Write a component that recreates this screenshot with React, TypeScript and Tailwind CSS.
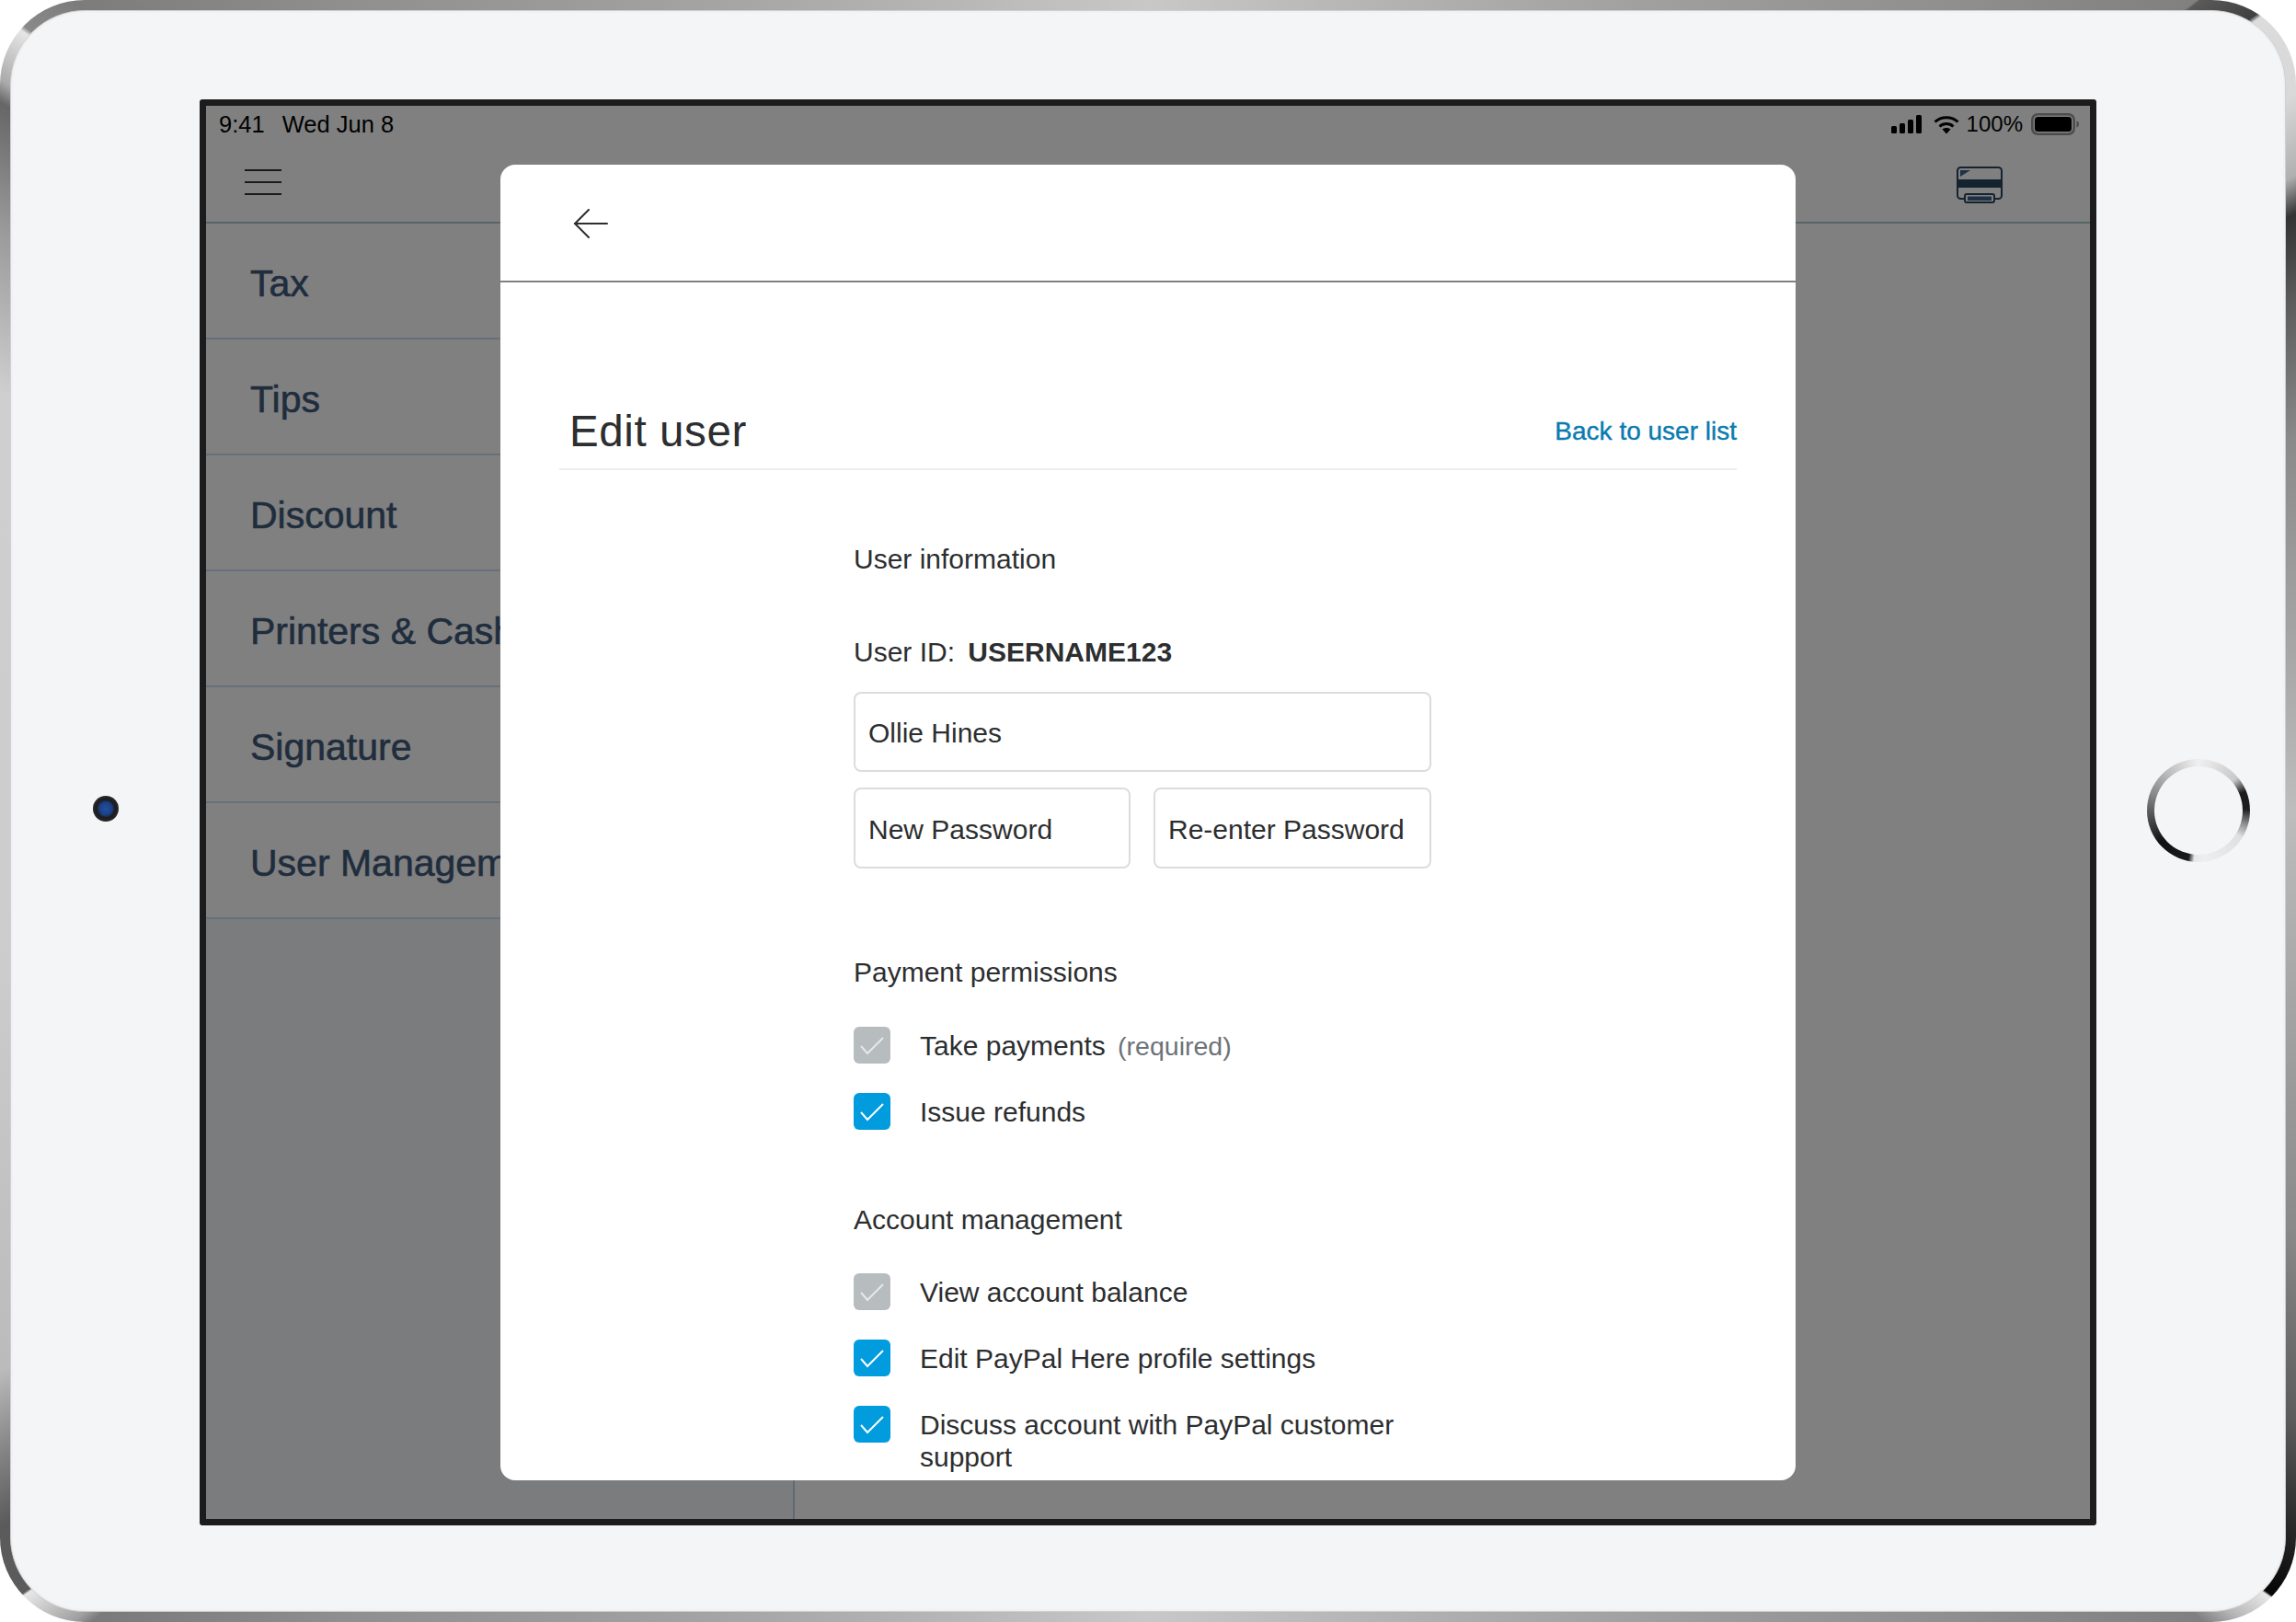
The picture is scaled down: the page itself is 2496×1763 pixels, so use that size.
import React from 'react';

const navItems = ['Tax', 'Tips', 'Discount', 'Printers & Cash Drawer', 'Signature', 'User Management'];

const SignalIcon = () => (
  <svg width="33" height="20" viewBox="0 0 33 20" fill="#000">
    <rect x="0" y="12" width="6" height="8" rx="1.5" />
    <rect x="9" y="9" width="6" height="11" rx="1.5" />
    <rect x="18" y="5" width="6" height="15" rx="1.5" />
    <rect x="27" y="0" width="6" height="20" rx="1.5" />
  </svg>
);

const WifiIcon = () => (
  <svg width="28" height="21" viewBox="0 0 28 21" fill="none" stroke="#000" strokeWidth="3">
    <path d="M1.5 7.5C8.5 1 19.5 1 26.5 7.5" />
    <path d="M6.5 12.5C10.8 8.6 17.2 8.6 21.5 12.5" />
    <path d="M9.5 15.6C12 13.6 16 13.6 18.5 15.6L14 20.5Z" fill="#000" stroke="none" />
  </svg>
);

const BatteryIcon = () => (
  <svg width="53" height="24" viewBox="0 0 53 24">
    <rect x="1.25" y="1.25" width="45.5" height="21.5" rx="6" fill="none" stroke="#4d4d4d" strokeWidth="2.5" />
    <rect x="4" y="4" width="40" height="16" rx="3.5" fill="#000" />
    <path d="M49.5 8.5C51.5 9 52 10.500 52 12C52 13.500 51.500 15 49.500 15.500Z" fill="#4d4d4d" />
  </svg>
);

const CardReaderIcon = () => (
  <svg width="50" height="40" viewBox="0 0 50 40" className="mt-[6px]">
    <rect x="1" y="1" width="48" height="34" rx="3.500" fill="none" stroke="#14232f" strokeWidth="2" />
    <rect x="1" y="14" width="48" height="9" fill="#14232f" />
    <path d="M4 4H15L4 11Z" fill="#1f3245" />
    <rect x="9" y="30" width="32" height="9" rx="2" fill="#808080" stroke="#14232f" strokeWidth="2" />
    <rect x="12" y="32.500" width="26" height="4.500" fill="#1f3245" />
  </svg>
);

const BackArrow = () => (
  <svg width="38" height="32" viewBox="0 0 38 32" fill="none" stroke="#2c2e2f" strokeWidth="2" strokeLinecap="round">
    <path d="M37 16H2" />
    <path d="M17 1L2 16L17 31" />
  </svg>
);

const Checkbox = ({ disabled }: { disabled?: boolean }) => (
  <span className={`flex h-[40px] w-[40px] shrink-0 items-center justify-center rounded-[6px] ${disabled ? 'bg-[#b7bcbf]' : 'bg-[#009cde]'}`}>
    <svg width="40" height="40" viewBox="0 0 40 40" fill="none" stroke={disabled ? '#e6e8e9' : '#fff'} strokeWidth="2">
      <path d="M8 21L15 29L32 12" />
    </svg>
  </span>
);

const CheckRow = ({ disabled, children }: { disabled?: boolean; children: React.ReactNode }) => (
  <label className="flex items-start gap-[32px]">
    <Checkbox disabled={disabled} />
    <span className="mt-[3px] w-[556px] text-[30px] leading-[35px]">{children}</span>
  </label>
);

const TextField = ({ value, className }: { value: string; className: string }) => (
  <input
    readOnly
    value={value}
    className={`rounded-[8px] border-2 border-[#dcdcdc] bg-white px-[14px] pt-[3px] text-[30px] text-[#2c2e2f] outline-none ${className}`}
  />
);

const EditUserModal = () => (
  <div className="absolute left-[320px] top-[64px] h-[1430px] w-[1408px] overflow-hidden rounded-[16px] bg-white text-[#2c2e2f]">
    <div className="flex h-[128px] items-center border-b-2 border-[#808080] pl-[79px] pt-[2px]">
      <BackArrow />
    </div>
    <div className="mx-[64px] mt-[121px] flex h-[83px] items-center justify-between border-b-2 border-[#eaedf2] pl-[11px]">
      <h1 className="text-[47.5px] leading-[56px] tracking-[0.6px]">Edit user</h1>
      <a className="text-[28px] text-[#0a7bb0] [-webkit-text-stroke:0.4px_#0a7bb0]">Back to user list</a>
    </div>

    <div className="ml-[384px] w-[628px]">
      <h2 className="mt-[79px] text-[30px] leading-[36px]">User information</h2>
      <p className="mt-[65px] text-[30px] leading-[36px]">
        User ID: <span className="ml-[6px] font-bold">USERNAME123</span>
      </p>
      <TextField value="Ollie Hines" className="mt-[25px] block h-[87px] w-full" />
      <div className="mt-[17px] flex justify-between">
        <TextField value="New Password" className="h-[88px] w-[301px]" />
        <TextField value="Re-enter Password" className="h-[88px] w-[302px]" />
      </div>

      <h2 className="mt-[95px] text-[30px] leading-[36px]">Payment permissions</h2>
      <div className="mt-[41px] flex flex-col gap-[32px]">
        <CheckRow disabled>
          Take payments <span className="ml-[5px] text-[28.5px] text-[#6c7378]">(required)</span>
        </CheckRow>
        <CheckRow>Issue refunds</CheckRow>
      </div>

      <h2 className="mt-[80px] text-[30px] leading-[36px]">Account management</h2>
      <div className="mt-[40px] flex flex-col gap-[32px]">
        <CheckRow disabled>View account balance</CheckRow>
        <CheckRow>Edit PayPal Here profile settings</CheckRow>
        <CheckRow>Discuss account with PayPal customer support</CheckRow>
      </div>
    </div>
  </div>
);

const Screen = () => (
  <div className="relative flex h-[1550px] w-[2062px] shrink-0 flex-col overflow-hidden rounded-[3px] border-[7px] border-[#1c1c1c] bg-[#808080]">
    <div className="flex h-[40px] items-center justify-between pl-[14px] pr-[11px] text-[25.5px] text-black">
      <div className="flex gap-[19px]">
        <span>9:41</span>
        <span>Wed Jun 8</span>
      </div>
      <div className="flex items-center">
        <SignalIcon />
        <span className="ml-[13px]"><WifiIcon /></span>
        <span className="ml-[8px] text-[24px]">100%</span>
        <span className="ml-[9px]"><BatteryIcon /></span>
      </div>
    </div>
    <div className="flex h-[88px] items-center justify-between border-b-2 border-[#566568] pl-[42px] pr-[95px]">
      <div className="flex w-[40px] flex-col gap-[11px]">
        <div className="h-[2px] bg-[#1a1a1a]" />
        <div className="h-[2px] bg-[#1a1a1a]" />
        <div className="h-[2px] bg-[#1a1a1a]" />
      </div>
      <CardReaderIcon />
    </div>
    <div className="flex flex-1">
      <div className="w-[640px] border-r-2 border-[#616a73] bg-[#7b7c7d]">
        {navItems.map((item) => (
          <div
            key={item}
            className="flex h-[126px] items-center border-b-2 border-[#66707c] bg-[#808080] pl-[48px] pt-[8px] text-[41px] text-[#1f2d3d] [-webkit-text-stroke:0.6px_#1f2d3d]"
          >
            {item}
          </div>
        ))}
      </div>
    </div>
    <EditUserModal />
  </div>
);

const App = () => (
  <div className="h-[1763px] w-[2496px] bg-white [font-family:'Liberation_Sans',sans-serif]">
    <div className="h-full rounded-[92px] bg-[conic-gradient(#c8c8c8_0deg,#8f8f8f_45deg,#808080_52.3deg,#5a5a5a_52.4deg,#3f3f3f_54.3deg,#dcdcdc_54.5deg,#d8d8d8_58deg,#b0b0b0_61deg,#333333_62.5deg,#5c5c5c_66deg,#8a8a8a_72deg,#bdbdbd_90deg,#8a8a8a_110deg,#5c5c5c_118deg,#050505_124.9deg,#e8e8e8_125deg,#b5b5b5_126.5deg,#808080_127.5deg,#8f8f8f_135deg,#c8c8c8_180deg,#8f8f8f_225deg,#7a7a7a_232.5deg,#a0a0a0_233deg,#e8e8e8_235.1deg,#5c5c5c_235.2deg,#5a5a5a_238deg,#888888_241deg,#bbbbbb_244deg,#cccccc_262deg,#cfcfcf_290deg,#999999_297deg,#666666_301.7deg,#aaaaaa_302.5deg,#e6e6e6_304.7deg,#8a8a8a_304.9deg,#7c7c7c_307deg,#8f8f8f_315deg,#c8c8c8_360deg)] p-[11px]">
      <div className="flex h-full items-start rounded-[81px] border border-[#cfcfcf] bg-[#f4f5f7] pt-[96px] shadow-[inset_0_0_0_2px_#f0f1f3]">
        <div className="flex h-[1550px] w-[205px] items-center justify-center pb-[8px]">
          <div className="h-[28px] w-[28px] rounded-full bg-[radial-gradient(circle,#23509f_0%,#1b3f85_35%,#1c1c1e_50%,#333335_90%)]" />
        </div>
        <Screen />
        <div className="flex h-[1550px] flex-1 items-center justify-end pb-[4px] pr-[38px]">
          <div className="flex h-[112px] w-[112px] items-center justify-center rounded-full bg-[conic-gradient(#f0f0f0_0deg,#c8c8c8_50deg,#1c1c1c_68deg,#1c1c1c_88deg,#888888_105deg,#e0e0e0_122deg,#eeeeee_172deg,#e8e8e8_185deg,#1a1a1a_192deg,#111111_230deg,#555555_265deg,#888888_290deg,#bbbbbb_320deg,#f0f0f0_360deg)]">
            <div className="h-[96px] w-[96px] rounded-full bg-[#f4f5f7]" />
          </div>
        </div>
      </div>
    </div>
  </div>
);

export default App;
